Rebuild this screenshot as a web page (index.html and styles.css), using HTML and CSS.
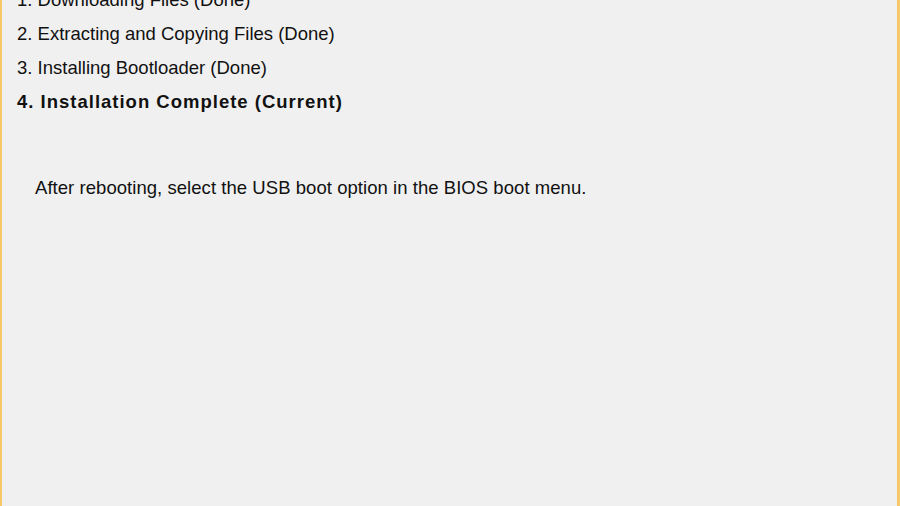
FILE: index.html
```html
<!DOCTYPE html>
<html lang="en">
<head>
<meta charset="utf-8">
<title>Installation Complete</title>
<link rel="stylesheet" href="styles.css">
</head>
<body>
<div class="dialog">
  <ol class="steps">
    <li class="step">1. Downloading Files (Done)</li>
    <li class="step">2. Extracting and Copying Files (Done)</li>
    <li class="step">3. Installing Bootloader (Done)</li>
    <li class="step current">4. Installation Complete (Current)</li>
  </ol>
  <p class="message">After rebooting, select the USB boot option in the BIOS boot menu.</p>
</div>
</body>
</html>
```
FILE: styles.css
```css
html, body {
  margin: 0;
  padding: 0;
  height: 100%;
}
body {
  background: #f0f0f0;
  overflow: hidden;
}
.dialog {
  box-sizing: border-box;
  width: 900px;
  height: 506px;
  border-left: 2px solid #f7c868;
  border-right: 3px solid #f7c868;
  background: #f0f0f0;
  color: #111;
  font-family: "Liberation Sans", Arial, sans-serif;
  font-size: 18.5px;
  overflow: hidden;
}
.steps {
  list-style: none;
  margin: -17px 0 0 0;
  padding: 0 0 0 15px;
}
.step {
  line-height: 34px;
  height: 34px;
}
.current {
  font-weight: bold;
  letter-spacing: 1px;
}
.message {
  margin: 52px 0 0 0;
  padding-left: 33px;
  line-height: 34px;
  letter-spacing: 0.05px;
}
```
